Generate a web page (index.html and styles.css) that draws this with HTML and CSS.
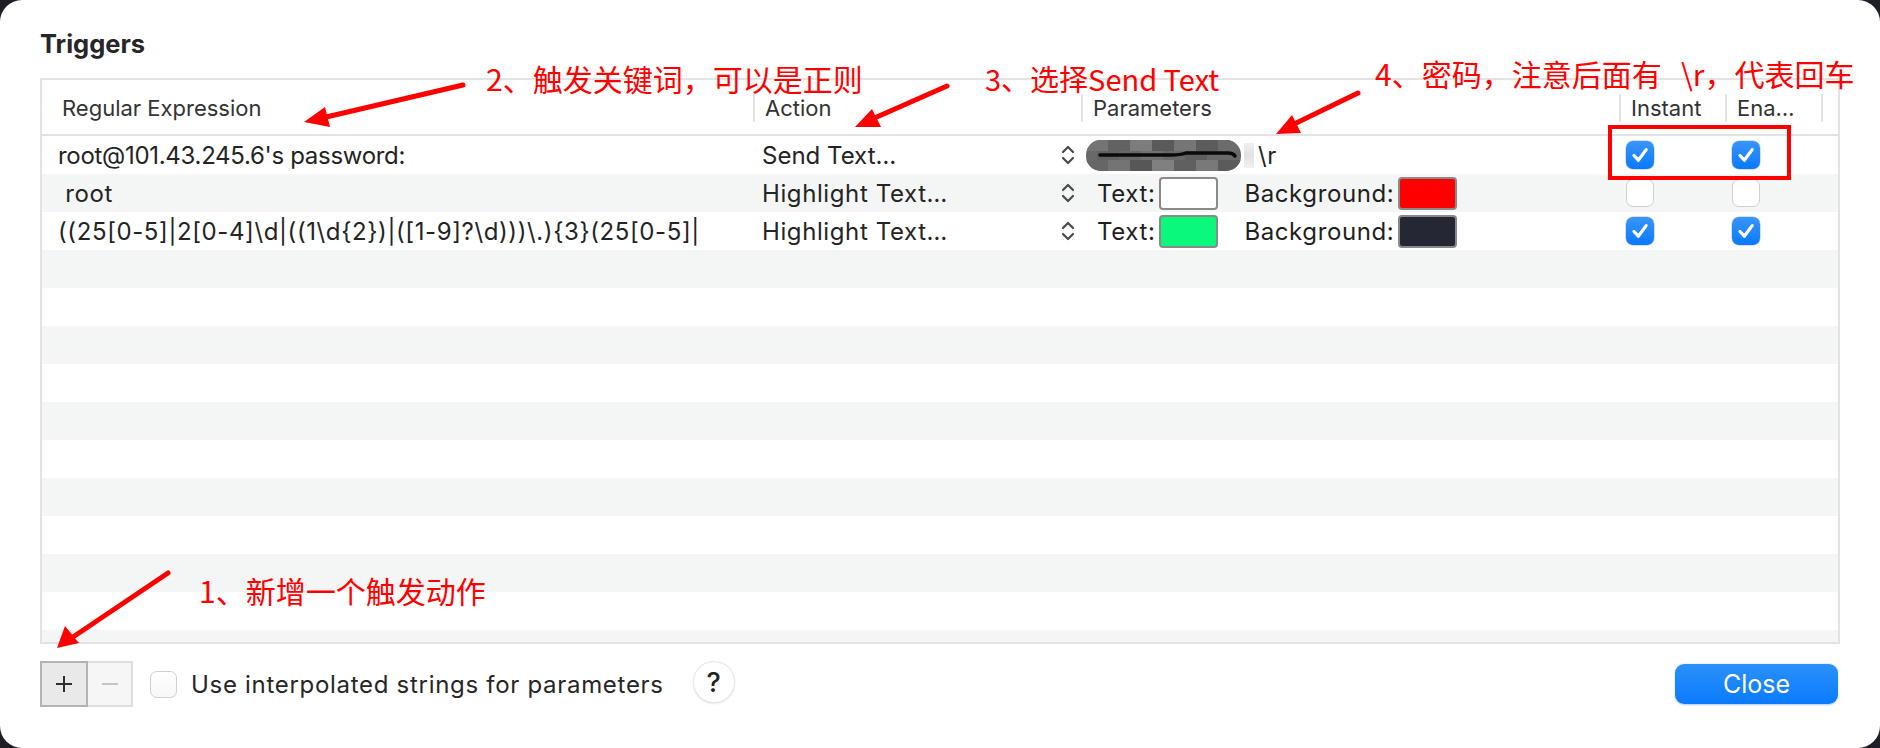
FILE: index.html
```html
<!DOCTYPE html>
<html>
<head>
<meta charset="utf-8">
<link rel="stylesheet" href="styles.css">
</head>
<body>
<div class="dialog">
  <h1 class="title">Triggers</h1>
  <div class="table">
    <div class="thead">
      <div class="th c1">Regular Expression</div>
      <div class="th sep">Action</div>
      <div class="th sep">Parameters</div>
      <div class="th sep">Instant</div>
      <div class="th sep">Ena…</div>
      <div class="th sep"></div>
    </div>
    <div class="tbody">
      <div class="row">
        <div class="td c1 digits">root@101.43.245.6's password:</div>
        <div class="td c2"><span class="send">Send Text…</span><svg class="stepper" width="14" height="24" viewBox="0 0 14 24"><path d="M2 9 L7 4 L12 9 M2 15 L7 20 L12 15" fill="none" stroke="#4a4a4a" stroke-width="2.2" stroke-linecap="round" stroke-linejoin="round"/></svg></div>
        <div class="td c3 pw">
          <svg class="blob" width="155" height="31" viewBox="0 0 155 31">
            <defs><clipPath id="bc"><rect x="0" y="0" width="155" height="31" rx="15" ry="15"/></clipPath></defs>
            <g clip-path="url(#bc)">
              <rect x="0" y="0" width="155" height="31" fill="#696969"/>
              <rect x="0" y="0" width="22" height="11" fill="#747474"/>
              <rect x="22" y="0" width="22" height="11" fill="#626262"/>
              <rect x="44" y="0" width="22" height="11" fill="#7c7c7c"/>
              <rect x="66" y="0" width="22" height="11" fill="#5a5a5a"/>
              <rect x="88" y="0" width="22" height="11" fill="#767676"/>
              <rect x="110" y="0" width="22" height="11" fill="#5c5c5c"/>
              <rect x="132" y="0" width="23" height="11" fill="#6c6c6c"/>
              <rect x="11" y="11" width="22" height="9" fill="#626262"/>
              <rect x="55" y="11" width="22" height="9" fill="#727272"/>
              <rect x="99" y="11" width="22" height="9" fill="#5e5e5e"/>
              <rect x="0" y="20" width="22" height="11" fill="#666"/>
              <rect x="22" y="20" width="22" height="11" fill="#747474"/>
              <rect x="44" y="20" width="22" height="11" fill="#575757"/>
              <rect x="66" y="20" width="22" height="11" fill="#808080"/>
              <rect x="88" y="20" width="22" height="11" fill="#606060"/>
              <rect x="110" y="20" width="22" height="11" fill="#797979"/>
              <rect x="132" y="20" width="23" height="11" fill="#5b5b5b"/>
              <path d="M14 15 H85 Q95 15 100 13 H142 Q147 13 149 16" fill="none" stroke="#0a0a0a" stroke-width="3.5" stroke-linecap="round"/>
            </g>
          </svg>
          <span class="ghost"></span><span class="cr">\r</span>
        </div>
        <div class="td cb"><span class="check on"><svg width="28" height="28" viewBox="0 0 28 28"><path d="M8 14.5 L12.3 19.2 L20.2 8.6" fill="none" stroke="#fff" stroke-width="3.2" stroke-linecap="round" stroke-linejoin="round"/></svg></span></div>
        <div class="td cb"><span class="check on"><svg width="28" height="28" viewBox="0 0 28 28"><path d="M8 14.5 L12.3 19.2 L20.2 8.6" fill="none" stroke="#fff" stroke-width="3.2" stroke-linecap="round" stroke-linejoin="round"/></svg></span></div>
        <div class="td"></div>
      </div>
      <div class="row">
        <div class="td c1">&nbsp;root</div>
        <div class="td c2"><span>Highlight Text…</span><svg class="stepper" width="14" height="24" viewBox="0 0 14 24"><path d="M2 9 L7 4 L12 9 M2 15 L7 20 L12 15" fill="none" stroke="#4a4a4a" stroke-width="2.2" stroke-linecap="round" stroke-linejoin="round"/></svg></div>
        <div class="td c3 params"><span class="lbl">Text:</span><span class="swatch" style="background:#ffffff"></span><span class="lbl bg">Background:</span><span class="swatch" style="background:#ff0000"></span></div>
        <div class="td cb"><span class="check"></span></div>
        <div class="td cb"><span class="check"></span></div>
        <div class="td"></div>
      </div>
      <div class="row">
        <div class="td c1">((25[0-5]|2[0-4]\d|((1\d{2})|([1-9]?\d)))\.){3}(25[0-5]|</div>
        <div class="td c2"><span>Highlight Text…</span><svg class="stepper" width="14" height="24" viewBox="0 0 14 24"><path d="M2 9 L7 4 L12 9 M2 15 L7 20 L12 15" fill="none" stroke="#4a4a4a" stroke-width="2.2" stroke-linecap="round" stroke-linejoin="round"/></svg></div>
        <div class="td c3 params"><span class="lbl">Text:</span><span class="swatch" style="background:#0bf97a"></span><span class="lbl bg">Background:</span><span class="swatch" style="background:#262734"></span></div>
        <div class="td cb"><span class="check on"><svg width="28" height="28" viewBox="0 0 28 28"><path d="M8 14.5 L12.3 19.2 L20.2 8.6" fill="none" stroke="#fff" stroke-width="3.2" stroke-linecap="round" stroke-linejoin="round"/></svg></span></div>
        <div class="td cb"><span class="check on"><svg width="28" height="28" viewBox="0 0 28 28"><path d="M8 14.5 L12.3 19.2 L20.2 8.6" fill="none" stroke="#fff" stroke-width="3.2" stroke-linecap="round" stroke-linejoin="round"/></svg></span></div>
        <div class="td"></div>
      </div>
      <div class="row empty"></div>
      <div class="row empty"></div>
      <div class="row empty"></div>
      <div class="row empty"></div>
      <div class="row empty"></div>
      <div class="row empty"></div>
      <div class="row empty"></div>
      <div class="row empty"></div>
      <div class="row empty"></div>
      <div class="row empty"></div>
      <div class="row empty"></div>
    </div>
  </div>
  <div class="footer">
    <div class="seg">
      <span class="segbtn plus"><svg width="20" height="20" viewBox="0 0 20 20"><path d="M10 2 V18 M2 10 H18" stroke="#2e2e2e" stroke-width="2"/></svg></span>
      <span class="segbtn minus"><svg width="20" height="20" viewBox="0 0 20 20"><path d="M2 10 H18" stroke="#c4c4c4" stroke-width="2"/></svg></span>
    </div>
    <span class="check plain"></span>
    <span class="opt">Use interpolated strings for parameters</span>
    <span class="help">?</span>
    <button class="close">Close</button>
  </div>

  <div class="note n2">2、触发关键词，可以是正则</div>
  <div class="note n3">3、选择Send Text</div>
  <div class="note n4">4、密码，注意后面有  \r，代表回车</div>
  <div class="note n1">1、新增一个触发动作</div>
  <div class="redbox"></div>
  <svg class="arrows" width="1880" height="748" viewBox="0 0 1880 748">
    <g stroke="#ff0000" stroke-width="5" stroke-linecap="round" fill="none">
      <path d="M463 85 L322 118"/>
      <path d="M947 86 L870 120"/>
      <path d="M1358 93 L1290 126"/>
      <path d="M168 573 L70 639"/>
    </g>
    <g fill="#ff0000">
      <polygon points="304,122 325,107 330,127"/>
      <polygon points="855,127 872,109 881,127"/>
      <polygon points="1276,134 1292,115 1301,133"/>
      <polygon points="57,648 65,626 79,643"/>
    </g>
  </svg>
</div>
</body>
</html>
```
FILE: styles.css
```css
html, body {
  margin: 0;
  padding: 0;
}
body {
  background: #1d1e26;
  width: 1880px;
  height: 748px;
  overflow: hidden;
  font-family: Inter, "Noto Sans", "Noto Sans CJK SC", sans-serif;
}
.dialog {
  position: relative;
  width: 1880px;
  height: 748px;
  box-sizing: border-box;
  background: #ffffff;
  border-radius: 22px;
  padding: 28px 40px 0 40px;
  display: flex;
  flex-direction: column;
}
.title {
  margin: 0 0 18px 0;
  font-size: 25.5px;
  line-height: 32px;
  font-weight: 700;
  color: #262626;
}
.table {
  border: 2px solid #e3e3e3;
  height: 566px;
  box-sizing: border-box;
  display: flex;
  flex-direction: column;
  overflow: hidden;
}
.thead, .row {
  display: grid;
  grid-template-columns: 711px 328px 538px 106px 96px 1fr;
}
.thead {
  height: 54px;
  border-bottom: 2px solid #e3e3e3;
  align-items: center;
  flex: none;
}
.th {
  font-size: 22px;
  color: #333333;
  height: 28px;
  line-height: 28px;
  padding-left: 10px;
  white-space: nowrap;
  overflow: hidden;
  margin-top: 2px;
}
.th.c1 {
  padding-left: 20px;
}
.th.sep {
  border-left: 2px solid #e3e3e3;
}
.tbody {
  flex: 1;
  overflow: hidden;
}
.row {
  height: 38px;
  align-items: center;
  font-size: 24px;
  letter-spacing: 0.6px;
  color: #242424;
}
.row:nth-child(even) {
  background: #f4f5f5;
}
.td {
  height: 38px;
  display: flex;
  align-items: center;
  white-space: pre;
  overflow: hidden;
}
.td.c1 {
  padding-left: 16px;
}
.td.c1.digits {
  letter-spacing: -0.3px;
}
.td.c2 {
  padding-left: 9px;
  padding-right: 6px;
  justify-content: space-between;
}
.send {
  letter-spacing: 0;
}
.stepper {
  display: block;
}
.td.c3.pw {
  padding-left: 5px;
}
.blob {
  display: block;
}
.ghost {
  width: 10px;
  height: 25px;
  margin-left: 3px;
  background: linear-gradient(#f0f0f0, #e2e2e2 50%, #f2f2f2);
}
.cr {
  margin-left: 4px;
}
.td.params {
  padding-left: 16px;
}
.lbl {
  color: #1f1f1f;
}
.lbl.bg {
  margin-left: 26px;
}
.swatch {
  width: 59px;
  height: 33px;
  box-sizing: border-box;
  border: 2px solid #8a8a8a;
  border-radius: 4px;
  margin-left: 4px;
}
.td.cb {
  padding-left: 7px;
}
.check {
  display: block;
  width: 28px;
  height: 28px;
  box-sizing: border-box;
  border-radius: 7px;
  border: 1.5px solid #d0d0d0;
  background: #ffffff;
  flex: none;
}
.check.on {
  border: none;
  background: linear-gradient(#3a95f8, #0a79ff);
  box-shadow: 0 0 0 0.5px rgba(0, 90, 200, 0.35);
}
.check svg {
  display: block;
}
.footer {
  display: flex;
  align-items: center;
  height: 46px;
  margin-top: 17px;
  padding-right: 2px;
}
.seg {
  display: flex;
  height: 46px;
}
.segbtn {
  display: flex;
  align-items: center;
  justify-content: center;
  box-sizing: border-box;
  height: 46px;
}
.segbtn.plus {
  width: 48px;
  background: #e9e9e9;
  border: 2px solid #b4b4b4;
}
.segbtn.minus {
  width: 45px;
  background: #f6f6f6;
  border: 2px solid #dedede;
  border-left: none;
}
.check.plain {
  width: 27px;
  height: 27px;
  margin-left: 17px;
  border-color: #cfcfcf;
  background: linear-gradient(#ffffff, #f7f7f7);
}
.opt {
  margin-left: 14px;
  font-size: 24px;
  letter-spacing: 0.7px;
  color: #262626;
}
.help {
  margin-left: 30px;
  width: 40px;
  height: 40px;
  border-radius: 50%;
  background: #ffffff;
  box-shadow: 0 0 0 1px #e6e6e6, 0 1px 3px rgba(0, 0, 0, 0.18);
  display: flex;
  align-items: center;
  justify-content: center;
  font-size: 27px;
  font-weight: 500;
  color: #222;
  position: relative;
  top: -2px;
}
.close {
  margin-left: auto;
  width: 163px;
  height: 40px;
  border: none;
  border-radius: 9px;
  background: linear-gradient(#2b91f8, #0a7aff);
  color: #ffffff;
  font-family: Inter, "Noto Sans", sans-serif;
  font-size: 25px;
  box-shadow: 0 0.5px 2px rgba(0, 80, 200, 0.3);
}
.note {
  position: absolute;
  color: #ff0000;
  font-family: "Noto Sans CJK SC", "Noto Sans", sans-serif;
  font-size: 30px;
  line-height: 30px;
  white-space: pre;
}
.n2 { left: 486px; top: 63px; }
.n3 { left: 985px; top: 63px; font-size: 29px; }
.n4 { left: 1375px; top: 58px; word-spacing: 3px; }
.n1 { left: 199px; top: 575px; }
.redbox {
  position: absolute;
  left: 1608px;
  top: 125px;
  width: 183px;
  height: 55px;
  box-sizing: border-box;
  border: 4px solid #ff0000;
}
.arrows {
  position: absolute;
  left: 0;
  top: 0;
  pointer-events: none;
}
```
